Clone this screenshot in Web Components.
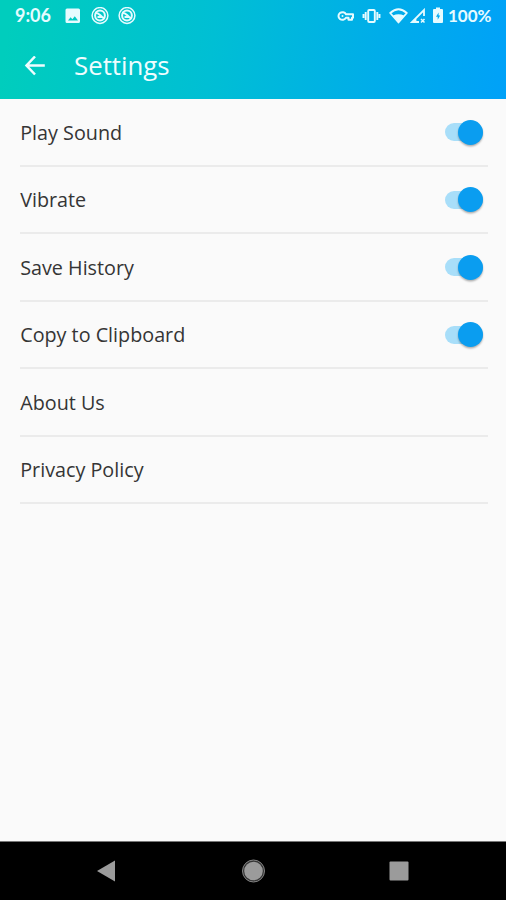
<!DOCTYPE html>
<html lang="en">
<head>
<meta charset="utf-8">
<title>Settings</title>
<style>
html,body{margin:0;height:100%}
body{background:#fafafa;overflow:hidden}
</style>
</head>
<body>
<settings-screen></settings-screen>
<script>
function define(name, html) {
  const t = document.createElement('template');
  t.innerHTML = html;
  customElements.define(name, class extends HTMLElement {
    constructor() {
      super();
      this.attachShadow({mode: 'open'}).appendChild(t.content.cloneNode(true));
    }
  });
}

define('status-bar', `
<style>
:host{display:flex;align-items:center;box-sizing:border-box;height:31px;padding:0 14px 0 15px;color:#e6fbff;font:700 17px/31px Lato,sans-serif}
.time{width:49px;font-size:18px}
svg{display:block;flex:none}
.spacer{flex:1}
.round{margin-left:9px}
.pct{width:44px;margin-left:3px;white-space:nowrap}
</style>
<span class="time">9:06</span>
<svg width="18" height="18" viewBox="0 0 18 18"><path fill="currentColor" fill-rule="evenodd" d="M3 1.500h11.500A1.500 1.500 0 0 1 16 3v11.500a1.500 1.500 0 0 1-1.500 1.500H3a1.500 1.500 0 0 1-1.500-1.500V3A1.500 1.500 0 0 1 3 1.500zM4 13.500h10l-3.200-4.200-2.400 3-1.800-2z"/></svg>
<svg class="round" width="18" height="18" viewBox="0 0 18 18" fill="none" stroke="currentColor"><circle cx="9" cy="8.500" r="7.900" stroke-width="1.500"/><circle cx="9" cy="8.500" r="4.900" stroke-width="2"/><path d="M4 5.700q3 .2 5 2.300t4.500 3.700M6.500 10h4" stroke-width="2"/></svg>
<svg class="round" width="18" height="18" viewBox="0 0 18 18" fill="none" stroke="currentColor"><circle cx="9" cy="8.500" r="7.900" stroke-width="1.500"/><circle cx="9" cy="8.500" r="4.900" stroke-width="2"/><path d="M4 5.700q3 .2 5 2.300t4.500 3.700M6.500 10h4" stroke-width="2"/></svg>
<span class="spacer"></span>
<svg width="18" height="12" viewBox="0 0 18 12" fill="none" stroke="currentColor" stroke-width="2"><path d="M9 4.200A4 3.800 0 1 0 9 7.800h2.500v2H15v-2h1V4.200z" stroke-linejoin="round"/><circle cx="5.500" cy="6" r="1" fill="currentColor" stroke="none"/></svg>
<svg style="margin-left:7px" width="19" height="14" viewBox="0 0 19 14" fill="none" stroke="currentColor" stroke-width="1.900"><rect x="6.200" y="1" width="6.600" height="12" rx="1"/><path d="M3.700 3v8M15.300 3v8M1.500 5v4M17.500 5v4"/></svg>
<svg style="margin-left:8px" width="19" height="16" viewBox="0 0 19 16"><path d="M1.200 5Q9.500-2.600 17.800 5L9.500 14.500z" fill="none" stroke="currentColor" stroke-width="1.800" stroke-linejoin="round"/><path fill="currentColor" d="M4 7.500Q9.500 5 15 7.500l-5.500 7z"/></svg>
<svg style="margin-left:2px" width="16" height="16" viewBox="0 0 16 16" fill="none" stroke="currentColor" stroke-width="1.800"><path d="M14 8V2L2 14h7M14 2v6M5.500 14v-3.500"/><path d="m11 11 3.500 3.500m0-3.500L11 14.500" stroke-width="1.500"/></svg>
<svg style="margin-left:6px;margin-right:1px" width="12" height="17" viewBox="0 0 12 17"><path fill="currentColor" fill-rule="evenodd" d="M4 .5h4V2h2a1 1 0 0 1 1 1v12a1 1 0 0 1-1 1H2a1 1 0 0 1-1-1V3a1 1 0 0 1 1-1h2zM6.600 5.500 4 9.800h1.700v3L8.200 8.600H6.600z"/></svg>
<span class="pct">100%</span>`);

define('app-bar', `
<style>
:host{display:flex;align-items:center;box-sizing:border-box;height:68px;padding:1px 0 0 24px;color:#effdff;font:25.800px/60px "Open Sans",sans-serif}
svg{display:block;margin-right:28px}
span{padding-bottom:2px}
</style>
<svg width="22" height="20" viewBox="0 0 22 20" fill="none" stroke="currentColor" stroke-width="2.500"><path d="M11 .5 2.500 9.500l8.500 9M2.700 9.500h18.100"/></svg>
<span><slot></slot></span>`);

define('toggle-switch', `
<style>
:host{display:flex;align-items:center;justify-content:flex-end;width:38.500px;height:18px;border-radius:9px;background:#a8def9}
i{width:25px;height:25px;flex:none;border-radius:50%;background:#0a9df0;box-shadow:0 1.500px 2px rgba(0,0,0,.3)}
</style><i></i>`);

define('setting-row', `
<style>
:host{display:flex;align-items:center;justify-content:space-between;box-sizing:border-box;height:67.500px;margin:0 18.500px 0 20px;padding:1px 4.500px 0 0;border-bottom:2px solid #ebebeb;color:#353535;font:19.750px/28px "Open Sans",sans-serif}
span{padding:1px 0 0 .2px}
</style>
<span><slot></slot></span><slot name="control"></slot>`);

define('nav-bar', `
<style>
:host{display:flex;justify-content:space-between;align-items:center;box-sizing:border-box;height:59px;padding:0 97px 0 96px;background:#000;border-top:1px solid #777}
svg{display:block}
</style>
<svg width="20" height="24" viewBox="0 0 20 24"><path fill="#9b9b9b" d="M19 1.500v21L1 12z"/></svg>
<svg width="24" height="24" viewBox="0 0 24 24"><circle cx="12.500" cy="12" r="11" fill="#333" stroke="#858585"/><circle cx="12.500" cy="12" r="9.300" fill="#9b9b9b"/></svg>
<svg width="20" height="24" viewBox="0 0 20 24"><rect x=".5" y="2.500" width="19" height="19" rx="1" fill="#9b9b9b"/></svg>`);

define('settings-screen', `
<style>
:host{display:flex;flex-direction:column;height:900px;background:#fafafa}
header{background:linear-gradient(97deg,#00cdbd 2%,#00bfd4 42%,#00ade9 74%,#00a1f8)}
main{flex:1}
</style>
<header><status-bar></status-bar><app-bar>Settings</app-bar></header>
<main>
<setting-row>Play Sound<toggle-switch slot="control"></toggle-switch></setting-row>
<setting-row>Vibrate<toggle-switch slot="control"></toggle-switch></setting-row>
<setting-row>Save History<toggle-switch slot="control"></toggle-switch></setting-row>
<setting-row>Copy to Clipboard<toggle-switch slot="control"></toggle-switch></setting-row>
<setting-row>About Us</setting-row>
<setting-row>Privacy Policy</setting-row>
</main>
<nav-bar></nav-bar>`);
</script>
</body>
</html>
